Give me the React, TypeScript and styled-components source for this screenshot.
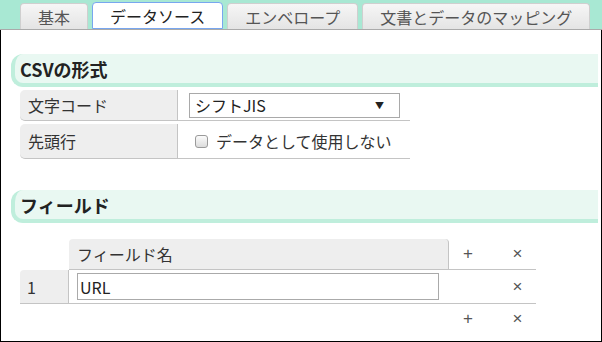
import styled, { createGlobalStyle } from 'styled-components';

const GlobalStyle = createGlobalStyle`
  html, body {
    margin: 0;
    padding: 0;
  }
  body {
    font-family: "Noto Sans CJK JP", "Noto Sans", sans-serif;
    font-size: 16px;
    color: #333;
    background: #fff;
  }
`

const Screen = styled.div`
  width: 602px;
  height: 342px;
  display: flex;
  flex-direction: column;
  box-sizing: border-box;
`

const TabBar = styled.div`
  display: flex;
  align-items: flex-end;
  gap: 4px;
  height: 30px;
  box-sizing: border-box;
  padding-left: 20px;
  background: #a8e8d3;
  border-bottom: 1px solid #aaa;
`

const Tab = styled.div<{ $active?: boolean }>`
  box-sizing: border-box;
  height: ${p => (p.$active ? 27 : 26)}px;
  padding: 0 17px;
  display: flex;
  align-items: center;
  font-size: 16px;
  line-height: 1;
  white-space: nowrap;
  border: 1px solid ${p => (p.$active ? '#78a6ef' : '#cfcfcf')};
  border-bottom: ${p => (p.$active ? '1px solid #78a6ef' : 'none')};
  border-radius: 4px 4px 0 0;
  background: ${p => (p.$active ? '#fff' : 'linear-gradient(#f6f6f6, #e4e4e4)')};
  color: ${p => (p.$active ? '#222' : '#555')};
`

const Frame = styled.div`
  flex: 1;
  display: flex;
  flex-direction: column;
  border: 1px solid #000;
  border-top: none;
`

const SectionTitle = styled.div<{ $top: number }>`
  box-sizing: border-box;
  height: 33px;
  margin: ${p => p.$top}px 3px 0 10px;
  padding-left: 5px;
  display: flex;
  align-items: center;
  background: #e9f8f2;
  border-left: 4px solid #bfeedc;
  border-bottom: 4px solid #bfeedc;
  border-radius: 12px 0 0 12px;
  font-size: 18px;
  font-weight: bold;
  color: #222;
  line-height: 1;
`

const PropTable = styled.div`
  display: grid;
  grid-template-columns: 158px 232px;
  grid-template-rows: 31px 35px;
  row-gap: 3px;
  margin: 3px 0 0 19px;
`

const PropLabel = styled.div`
  box-sizing: border-box;
  display: flex;
  align-items: center;
  padding-left: 8px;
  background: #eee;
  border-right: 1px solid #c4c4c4;
  border-bottom: 1px solid #c4c4c4;
  border-radius: 5px 0 0 5px;
  font-size: 16px;
`

const PropValue = styled.div<{ $pad: number }>`
  box-sizing: border-box;
  display: flex;
  align-items: center;
  padding-left: ${p => p.$pad}px;
  border-bottom: 1px solid #c4c4c4;
  font-size: 16px;
`

const SelectBox = styled.div`
  box-sizing: border-box;
  width: 211px;
  height: 25px;
  display: flex;
  align-items: center;
  justify-content: space-between;
  padding: 0 15px 0 5px;
  border: 1px solid #a9a9a9;
  color: #222;
  font-size: 16px;
`

const Arrow = styled.span`
  font-size: 9px;
  color: #222;
`

const CheckRow = styled.label`
  display: flex;
  align-items: center;
  gap: 8px;
`

const CheckBox = styled.span`
  box-sizing: border-box;
  flex: 0 0 13px;
  width: 13px;
  height: 13px;
  border: 1px solid #9a9a9a;
  border-radius: 3px;
  background: linear-gradient(#fbfbfb, #dcdcdc);
`

const FieldGrid = styled.div`
  display: grid;
  grid-template-columns: 49px 380px 38px 49px;
  grid-template-rows: 31px 34px 30px;
  margin: 16px 0 0 19px;
  width: 516px;
`

const Blank = styled.div``

const HeadCell = styled.div`
  box-sizing: border-box;
  display: flex;
  align-items: center;
  padding-left: 8px;
  background: #eee;
  border-right: 1px solid #c4c4c4;
  border-bottom: 1px solid #c4c4c4;
  border-radius: 4px 4px 0 0;
  font-size: 16px;
`

const NumCell = styled.div`
  box-sizing: border-box;
  display: flex;
  align-items: center;
  padding-left: 7px;
  background: #eee;
  border-right: 1px solid #c4c4c4;
  border-bottom: 1px solid #c4c4c4;
  border-radius: 4px 0 0 0;
  font-size: 16px;
`

const InputCell = styled.div`
  box-sizing: border-box;
  display: flex;
  align-items: center;
  padding-left: 8px;
  border-bottom: 1px solid #c4c4c4;
`

const TextInput = styled.input`
  box-sizing: border-box;
  width: 362px;
  height: 27px;
  padding: 0 2px;
  border: 1px solid #aaa;
  font-family: inherit;
  font-size: 16px;
  color: #222;
  outline: none;
`

const ActionCell = styled.div<{ $line?: boolean; $shift?: number }>`
  box-sizing: border-box;
  display: flex;
  align-items: center;
  justify-content: center;
  padding-left: ${p => p.$shift ?? 0}px;
  border-bottom: ${p => (p.$line ? '1px solid #c4c4c4' : 'none')};
  font-family: "Liberation Sans", Arial, sans-serif;
  font-size: 17px;
  color: #555;
  cursor: pointer;
`

const tabs = ['基本', 'データソース', 'エンベロープ', '文書とデータのマッピング'];

export default function App() {
  return (
    <Screen>
      <GlobalStyle />
      <TabBar>
        {tabs.map((t, i) => (
          <Tab key={t} $active={i === 1}>{t}</Tab>
        ))}
      </TabBar>
      <Frame>
        <SectionTitle $top={24}>CSVの形式</SectionTitle>
        <PropTable>
          <PropLabel>文字コード</PropLabel>
          <PropValue $pad={11}>
            <SelectBox>
              <span>シフトJIS</span>
              <Arrow>▼</Arrow>
            </SelectBox>
          </PropValue>
          <PropLabel>先頭行</PropLabel>
          <PropValue $pad={17}>
            <CheckRow>
              <CheckBox />
              <span>データとして使用しない</span>
            </CheckRow>
          </PropValue>
        </PropTable>

        <SectionTitle $top={31}>フィールド</SectionTitle>
        <FieldGrid>
          <Blank />
          <HeadCell>フィールド名</HeadCell>
          <ActionCell $line>+</ActionCell>
          <ActionCell $line $shift={12}>×</ActionCell>

          <NumCell>1</NumCell>
          <InputCell>
            <TextInput defaultValue="URL" />
          </InputCell>
          <ActionCell $line />
          <ActionCell $line $shift={12}>×</ActionCell>

          <Blank />
          <Blank />
          <ActionCell>+</ActionCell>
          <ActionCell $shift={12}>×</ActionCell>
        </FieldGrid>
      </Frame>
    </Screen>
  );
}
